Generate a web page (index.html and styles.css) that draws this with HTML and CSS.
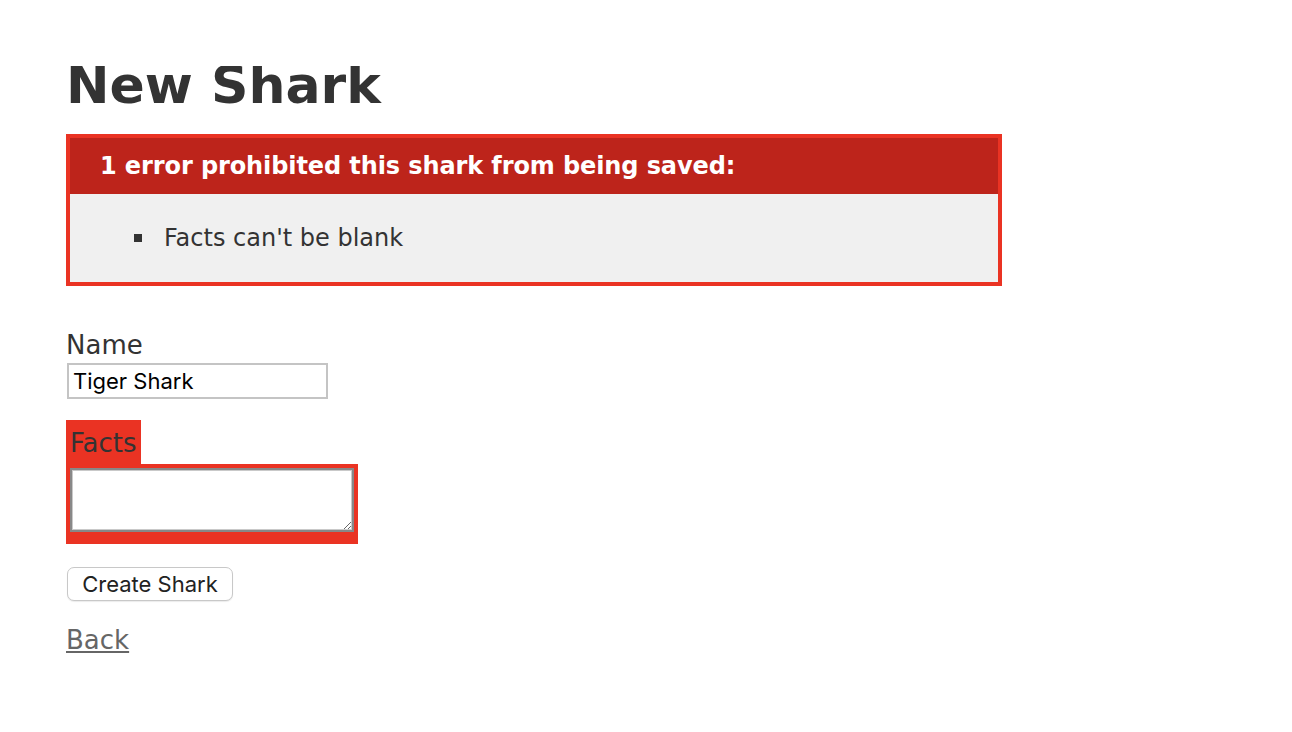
FILE: index.html
```html
<!DOCTYPE html>
<html lang="en">
<head>
<meta charset="utf-8">
<title>New Shark</title>
<link rel="stylesheet" href="styles.css">
</head>
<body>
<h1 class="title">New Shark</h1>

<form class="shark-form">
  <div class="error-explanation">
    <h2 class="error-heading">1 error prohibited this shark from being saved:</h2>
    <ul class="error-list">
      <li class="error-item">Facts can't be blank</li>
    </ul>
  </div>

  <div class="field">
    <label class="field-label" for="shark_name">Name</label>
    <input class="text-input" type="text" id="shark_name" value="Tiger Shark">
  </div>

  <div class="field">
    <div class="field-with-errors"><label class="field-label" for="shark_facts">Facts</label></div>
    <div class="field-with-errors area-wrap"><textarea class="text-area" id="shark_facts"></textarea></div>
  </div>

  <div class="actions">
    <button class="submit-btn" type="button">Create Shark</button>
  </div>
</form>

<a class="back-link" href="#">Back</a>
</body>
</html>
```

FILE: styles.css
```css
html, body {
  background: #fff;
}
body {
  margin: 66px;
  color: #333;
  font-family: "DejaVu Sans", Verdana, sans-serif;
  font-size: 26px;
  line-height: 36px;
}
.title {
  font-size: 52px;
  line-height: 36px;
  font-weight: bold;
  margin: 0 0 31px;
  padding-top: 1px;
  height: 36px;
}
.shark-form {
  margin: 0;
}
.error-explanation {
  width: 900px;
  border: 4px solid #ea3323;
  padding: 14px 14px 0;
  margin-bottom: 40px;
  background: #f0f0f0;
}
.error-heading {
  margin: -14px -14px 0;
  padding: 10px 10px 10px 30px;
  background: #bd241b;
  color: #fff;
  font-size: 24px;
  line-height: 36px;
  font-weight: bold;
  letter-spacing: -0.1px;
}
.error-list {
  margin: 26px 0;
  padding-left: 80px;
  list-style: none;
}
.error-item {
  position: relative;
  font-size: 24px;
}
.error-item::before {
  content: "";
  position: absolute;
  left: -30px;
  top: 14px;
  width: 8px;
  height: 8px;
  background: #333;
}
.field {
  display: flex;
  flex-direction: column;
  align-items: flex-start;
  margin-bottom: 20px;
}
.field-label {
  display: block;
  height: 36px;
  padding-top: 1px;
  box-sizing: border-box;
}
.text-input {
  box-sizing: border-box;
  margin: 1px 0 1px 1px;
  width: 261px;
  height: 36px;
  border: 2px solid #c4c4c4;
  padding: 0 4px;
  font-family: Inter, "Liberation Sans", sans-serif;
  font-size: 22px;
  color: #000;
  background: #fff;
}
.field-with-errors {
  padding: 4px;
  background: #ea3323;
}
.area-wrap {
  padding-bottom: 12px;
}
.text-area {
  display: block;
  box-sizing: border-box;
  width: 284px;
  height: 64px;
  margin: 0;
  border: 2px solid #888;
  box-shadow: inset 0 0 0 1px #c9c9c9;
  background: #fff;
  resize: both;
  font-family: "Liberation Mono", monospace;
  font-size: 20px;
}
.actions {
  margin-bottom: 20px;
  height: 38px;
  display: flex;
  align-items: flex-start;
}
.submit-btn {
  margin: 3px 0 0 1px;
  box-sizing: border-box;
  height: 34px;
  width: 166px;
  padding: 0;
  border: 1px solid #c8c8c8;
  border-radius: 7px;
  background: #fff;
  box-shadow: 0 1px 1px rgba(0,0,0,0.08);
  color: #222;
  font-family: Inter, "Liberation Sans", sans-serif;
  font-size: 22px;
}
.back-link {
  color: #666;
  text-decoration: underline;
}
```
